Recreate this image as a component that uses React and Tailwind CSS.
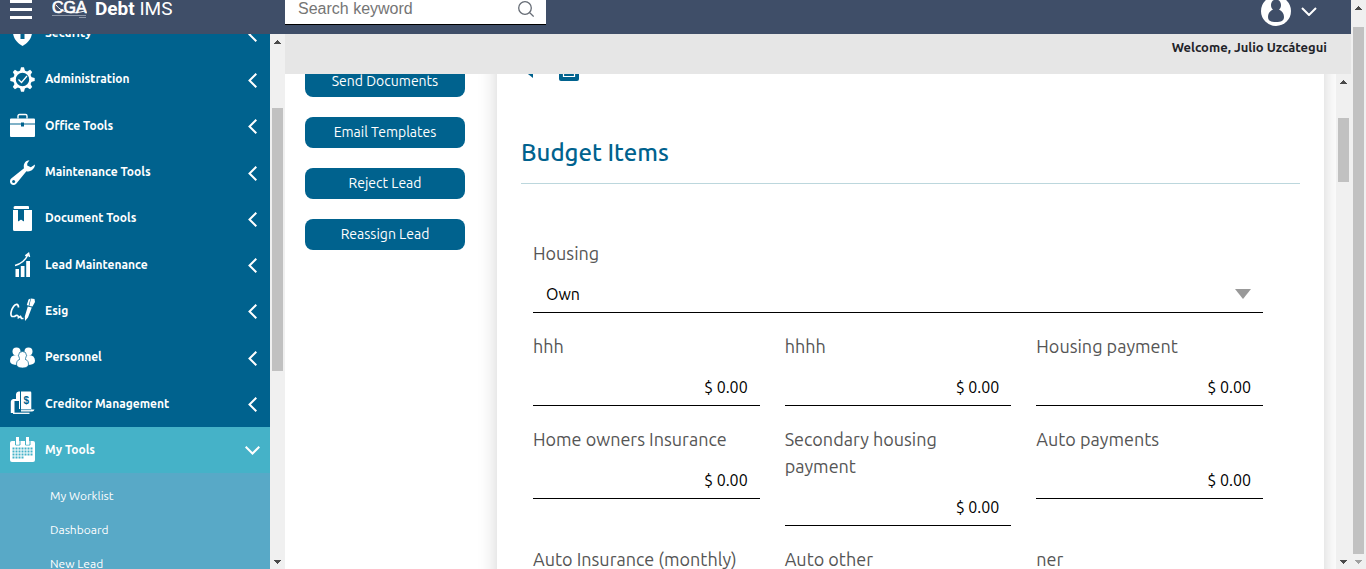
import React from "react";

const White = "#ffffff";

function Icon({ children, viewBox = "0 0 25 25" }) {
  return (
    <svg className="h-[25px] w-[25px] shrink-0" viewBox={viewBox} fill={White} aria-hidden="true">
      {children}
    </svg>
  );
}

const icons = {
  security: (
    <Icon>
      <path d="M12.500 0 L22 4 V11 C22 18 17 22.500 12.500 25 C8 22.500 3 18 3 11 V4 Z" />
      <rect x="10.500" y="12" width="4" height="6" fill="#00628e" />
    </Icon>
  ),
  admin: (
    <Icon>
      <g>
        {[0, 45, 90, 135, 180, 225, 270, 315].map((a) => (
          <path key={a} d="M10 4 L11 0.300 H14 L15 4 Z" transform={`rotate(${a} 12.5 12.5)`} />
        ))}
      </g>
      <circle cx="12.500" cy="12.500" r="8" fill="none" stroke={White} strokeWidth="2.600" />
      <path d="M8.500 12.500 L11.500 15.500 L17 9" fill="none" stroke={White} strokeWidth="1.300" />
    </Icon>
  ),
  office: (
    <Icon>
      <path d="M8 5.500 V3 Q8 1.500 9.500 1.500 H15.500 Q17 1.500 17 3 V5.500" fill="none" stroke={White} strokeWidth="1.400" />
      <path d="M1 5.500 H24 Q25 5.500 25 6.500 V10.500 H14 V9.500 H11 V10.500 H0 V6.500 Q0 5.500 1 5.500 Z" />
      <path d="M0 11.500 H11 V13.500 H14 V11.500 H25 V23 Q25 24 24 24 H1 Q0 24 0 23 Z" />
    </Icon>
  ),
  wrench: (
    <Icon>
      <path d="M19.500 0.300 C15.500 0.500 13 4 14 8.200 L1.200 18.600 C-0.500 20.200 -0.300 22.600 1 23.900 C2.400 25.300 4.800 25.300 6.200 23.700 L16.400 11.200 C20.800 12.200 24.800 9 25 4.600 L20.800 7.200 L17.200 5.500 L17.300 3.200 Z" />
      <circle cx="3.600" cy="21.400" r="1.500" fill="#00628e" />
    </Icon>
  ),
  document: (
    <Icon>
      <path d="M5 0 H18 Q19 0 19 1 V3 H4 L3.500 2 Q3.500 0 5 0 Z" />
      <path d="M3 4 H8 V15.500 L11 13.500 L14 15.500 V4 H22 V24 Q22 25 21 25 H4.500 Q3 25 3 23.500 Z" />
      <path d="M8.500 4 V14.500 L11 12.500 L13.500 14.500 V4" fill="none" stroke="#00628e" strokeWidth="1" />
    </Icon>
  ),
  lead: (
    <Icon>
      <path d="M5.500 17 H9 V25 H5.500 Z M10.800 14 H14.500 V25 H10.800 Z M16.200 9 H20 V25 H16.200 Z" />
      <path d="M5 13.500 C11 12 15.500 8 18 2.800 M15.300 3.800 L18.600 1.300 L19.500 5" fill="none" stroke={White} strokeWidth="1.500" />
    </Icon>
  ),
  esig: (
    <Icon>
      <path d="M8.500 9.500 C8.500 5.500 5.500 5.500 3.500 8.500 C1 12 0 17.500 2 18.500 L4.500 18.500 C7 16.500 8.500 17.500 8.500 19.500 L10.500 18.500 L11.500 20.500 L13.500 20.500" fill="none" stroke={White} strokeWidth="1.700" />
      <path d="M17.800 8.500 L21.800 9.500 L18 19.500 L15 23 L14.800 18.500 Z M18.500 1.500 L20.500 0.600 L18.600 7.700 L16.800 7 Z M21 0.500 L24.500 1 L25 4 L22.500 8.500 L19.300 7.900 Z" />
    </Icon>
  ),
  people: (
    <Icon>
      <circle cx="6.500" cy="6.500" r="4" />
      <circle cx="18.500" cy="6.500" r="4" />
      <path d="M0 16 Q0 10 6.500 10 Q10 10 11 12 L8 20 Q0 20 0 16 Z M25 16 Q25 10 18.500 10 Q15 10 14 12 L17 20 Q25 20 25 16 Z" />
      <g stroke="#00628e" strokeWidth="0.700">
        <path d="M6.500 19 Q6.500 14 12.500 14 Q18.500 14 18.500 19 Q18.500 23 12.500 23 Q6.500 23 6.500 19 Z" />
        <circle cx="12.500" cy="10.500" r="4" />
      </g>
      <path d="M10 13 H15 V16 H10 Z" />
    </Icon>
  ),
  creditor: (
    <Icon>
      <path d="M0.800 22 V10.500 Q1 8.500 3 8 H9 V10 H4.500 V22 Z" />
      <path d="M6 8 V3 Q6.500 1 8.500 0.600 H10 V18 H9 V8 Z" />
      <path d="M11 0.600 H20.500 Q21.300 0.600 21.300 2 V18.500 H24.500 Q24 20.500 22 20.500 H11 Z" />
      <path d="M3 22.300 H19.500" stroke={White} strokeWidth="1.300" />
      <path d="M11 18.700 H21" stroke="#00628e" strokeWidth="0.700" />
      <text x="16.300" y="13" textAnchor="middle" fontSize="10" fontWeight="700" fontFamily="Liberation Sans" fill="#00628e">
        $
      </text>
    </Icon>
  ),
  calendar: (
    <Icon>
      <path d="M2 4 H23 Q25 4 25 6 V23 Q25 25 23 25 H2 Q0 25 0 23 V6 Q0 4 2 4 Z" />
      <path d="M5.500 2 V8 H10 V2 M15.500 2 V8 H20 V2" fill="none" stroke="#45b2c8" strokeWidth="1" />
      <path d="M6 0 H9 V7.500 H6 Z M16 0 H19 V7.500 H16 Z" />
      <path d="M2.500 11.500 H23 M2.500 14.500 H23 M2.500 17.500 H23 M2.500 20.500 H14" stroke="#45b2c8" strokeWidth="2" strokeDasharray="2 1" />
    </Icon>
  ),
};

const menu = [
  ["Security", "security"],
  ["Administration", "admin"],
  ["Office Tools", "office"],
  ["Maintenance Tools", "wrench"],
  ["Document Tools", "document"],
  ["Lead Maintenance", "lead"],
  ["Esig", "esig"],
  ["Personnel", "people"],
  ["Creditor Management", "creditor"],
  ["My Tools", "calendar"],
];

function ScrollArrow({ up, dim }) {
  return (
    <svg className="h-[15px] w-[15px] shrink-0" viewBox="0 0 15 15" shapeRendering="crispEdges" aria-hidden="true">
      <path d={up ? "M4 10 L7.5 6 L11 10 Z" : "M4 6 L7.500 10 L11 6 Z"} fill={dim ? "#a0a0a0" : "#4a4a4a"} />
    </svg>
  );
}

function ScrollBar({ thumb, dimEnd }) {
  return (
    <div className="flex w-[15px] shrink-0 flex-col items-center bg-[#f0f0f0]">
      <ScrollArrow up />
      <div className="min-h-0 w-[11px] flex-1 overflow-hidden">
        <div className={`bg-[#c1c1c1] ${thumb}`} />
      </div>
      <ScrollArrow dim={dimEnd} />
    </div>
  );
}

function Header() {
  return (
    <header className="h-[34px] shrink-0 overflow-hidden bg-[#3f4e68]">
      <div className="-mt-4 flex h-[50px] items-center">
        <div className="flex w-[285px] shrink-0 items-center pl-[10px]">
          <button type="button" aria-label="Toggle menu" className="flex flex-col gap-[5px]">
            <span className="h-[3px] w-[22px] bg-white" />
            <span className="h-[3px] w-[22px] bg-white" />
            <span className="h-[3px] w-[22px] bg-white" />
          </button>
          <a href="#home" className="ml-5 flex items-center gap-2 text-white">
            <svg className="h-5 w-[35px]" viewBox="0 0 35 20" fill="white" aria-hidden="true">
              <text x="0" y="14" fontFamily="Liberation Sans" fontSize="16" stroke="white" strokeWidth="0.700">
                CGA
              </text>
              <path d="M4 6 C10 14 20 15.500 33 12" fill="none" stroke="white" strokeWidth="1" />
              <path d="M0 16.500 H34" stroke="#8d97a8" strokeWidth="1" />
              <path d="M27 18.500 H34" stroke="#8d97a8" strokeWidth="1" />
            </svg>
            <span className="font-['Roboto',sans-serif] text-[19px] leading-6">
              <b className="font-bold">Debt</b> IMS
            </span>
          </a>
        </div>
        <div className="flex h-8 w-[261px] items-center border-b border-black bg-white pr-3 pl-[13px]">
          <input
            type="text"
            aria-label="Search keyword"
            placeholder="Search keyword"
            className="min-w-0 flex-1 bg-transparent font-['Liberation_Sans',sans-serif] text-base text-gray-800 outline-none placeholder:text-[#757575]"
          />
          <button type="button" aria-label="Search">
            <svg className="h-4 w-4" viewBox="0 0 16 16" fill="none" stroke="#666c75" strokeWidth="1.300">
              <circle cx="7" cy="7" r="6.300" />
              <path d="M11.500 11.500 L15.700 15.500" />
            </svg>
          </button>
        </div>
        <button type="button" aria-label="Account" className="mr-[34px] ml-auto flex items-center gap-[10px] pt-1">
          <svg className="h-[30px] w-[30px]" viewBox="0 0 30 30" aria-hidden="true">
            <circle cx="15" cy="15" r="15" fill="white" />
            <path
              d="M15 3.500 C18 3.500 20 6 20 9 C20 11 19.300 12.500 18 13.500 C21.500 15 23 18 23 21 C23 25 20 26 15 26 C10 26 7 25 7 21 C7 18 8.500 15 12 13.500 C10.700 12.500 10 11 10 9 C10 6 12 3.500 15 3.500 Z"
              fill="#3f4e68"
            />
          </svg>
          <svg className="h-[9px] w-4" viewBox="0 0 16 9" fill="none" stroke="white" strokeWidth="2" aria-hidden="true">
            <path d="M1 1 L8 8 L15 1" />
          </svg>
        </button>
      </div>
    </header>
  );
}

function Sidebar() {
  return (
    <aside className="flex w-[285px] shrink-0">
      <nav className="min-w-0 flex-1 overflow-hidden bg-[#00628e] text-white">
        <ul className="-mt-6 grid h-[463px] auto-rows-fr">
          {menu.map(([label, icon]) => {
            const open = label === "My Tools";
            return (
              <li key={label} className={open ? "bg-[#45b2c8]" : ""}>
                <a href="#menu" className="flex h-full items-center gap-[10px] pr-[10px] pl-[10px]">
                  {icons[icon]}
                  <span className="flex-1 text-[12px] leading-5 font-bold">{label}</span>
                  <span className="flex w-[15px] justify-center pt-[2px]">
                    {open ? (
                      <svg className="h-[9px] w-[15px]" viewBox="0 0 15 9" fill="none" stroke="white" strokeWidth="2">
                        <path d="M0.700 0.700 L7.500 7.500 L14.300 0.700" />
                      </svg>
                    ) : (
                      <svg className="h-[15px] w-[9px]" viewBox="0 0 9 15" fill="none" stroke="white" strokeWidth="2">
                        <path d="M8.300 0.700 L1.500 7.500 L8.300 14.300" />
                      </svg>
                    )}
                  </span>
                </a>
              </li>
            );
          })}
        </ul>
        <ul className="bg-[#58a9c7] pt-[6px] pb-[6px]">
          {["My Worklist", "Dashboard", "New Lead", "My Leads"].map((label) => (
            <li key={label}>
              <a href="#menu" className="flex h-[34px] items-center pl-[50px] text-[12px]">
                {label}
              </a>
            </li>
          ))}
        </ul>
      </nav>
      <ScrollBar thumb="mt-[59px] h-[263px]" />
    </aside>
  );
}

function MoneyField({ id, label }) {
  return (
    <div className="flex flex-col gap-2">
      <label htmlFor={id} className="text-lg leading-[27px] text-[#555555]">
        {label}
      </label>
      <input
        id={id}
        type="text"
        defaultValue="$ 0.00"
        className="h-[38px] w-full border-b border-black px-3 text-right text-base text-black outline-none"
      />
    </div>
  );
}

const fields = [
  "hhh",
  "hhhh",
  "Housing payment",
  "Home owners Insurance",
  "Secondary housing payment",
  "Auto payments",
  "Auto Insurance (monthly)",
  "Auto other",
  "ner",
];

function BudgetCard() {
  return (
    <section className="min-w-0 flex-1 bg-white px-6 shadow-[0_0_18px_rgba(0,0,0,0.18)]">
      <div className="flex gap-[26px] pt-[60px] text-[#00628e]">
        <button type="button" aria-label="Back">
          <svg className="h-[22px] w-3" viewBox="0 0 12 22" fill="currentColor">
            <path d="M12 0 V19 L0 9.500 Z" />
          </svg>
        </button>
        <button type="button" aria-label="Save">
          <svg className="h-[22px] w-5" viewBox="0 0 20 22" fill="currentColor">
            <path d="M2 0 H18 Q20 0 20 2 V20 Q20 22 18 22 H2 Q0 22 0 20 V2 Q0 0 2 0 Z" />
            <path d="M4.500 8 H15.500 V17.500 H4.500 Z" fill="none" stroke="white" strokeWidth="1.200" />
          </svg>
        </button>
      </div>
      <h1 className="mt-[53px] border-b border-[#bcd7dd] pb-[11px] text-[24px] leading-[38px] font-medium text-[#00628e]">
        Budget Items
      </h1>
      <form className="mt-14 mr-[37px] ml-3 grid grid-cols-3 gap-x-[25px] gap-y-5">
        <div className="col-span-3 flex flex-col gap-2">
          <label htmlFor="housing" className="text-lg leading-[27px] text-[#555555]">
            Housing
          </label>
          <div className="grid items-center border-b border-black">
            <select
              id="housing"
              className="col-start-1 row-start-1 h-[37px] w-full appearance-none bg-transparent px-[13px] text-base text-black outline-none"
            >
              <option>Own</option>
              <option>Rent</option>
            </select>
            <svg
              className="pointer-events-none col-start-1 row-start-1 mr-3 h-[10px] w-4 justify-self-end"
              viewBox="0 0 16 10"
              fill="#999999"
            >
              <path d="M0 0 H16 L8 10 Z" />
            </svg>
          </div>
        </div>
        {fields.map((label, i) => (
          <MoneyField key={label} id={`budget-${i}`} label={label} />
        ))}
      </form>
    </section>
  );
}

export default function App() {
  return (
    <div className="flex h-screen overflow-hidden bg-white font-['Ubuntu','Noto_Sans',sans-serif]">
      <div className="flex min-w-0 flex-1 flex-col">
        <Header />
        <div className="flex min-h-0 flex-1">
          <Sidebar />
          <main className="flex min-w-0 flex-1 flex-col">
            <div className="flex h-10 shrink-0 justify-end bg-[#e6e6e6] pt-1 pr-6 text-[13px] leading-[18px] font-bold text-[#1f2329]">
              <p>Welcome, Julio Uzcátegui</p>
            </div>
            <div className="flex min-h-0 flex-1">
              <div className="min-w-0 flex-1 overflow-hidden">
                <div className="-mt-[75px] flex items-stretch pr-3">
                  <div className="flex w-[212px] shrink-0 flex-col gap-5 pt-[67px] pl-5">
                    {["Send Documents", "Email Templates", "Reject Lead", "Reassign Lead"].map((label) => (
                      <button
                        key={label}
                        type="button"
                        className="h-[31px] w-40 rounded-lg bg-[#00628e] pb-[2px] text-sm text-white"
                      >
                        {label}
                      </button>
                    ))}
                  </div>
                  <BudgetCard />
                </div>
              </div>
              <ScrollBar thumb="mt-[29px] h-16" />
            </div>
          </main>
        </div>
      </div>
      <ScrollBar thumb="mt-3 h-[527px]" dimEnd />
    </div>
  );
}
